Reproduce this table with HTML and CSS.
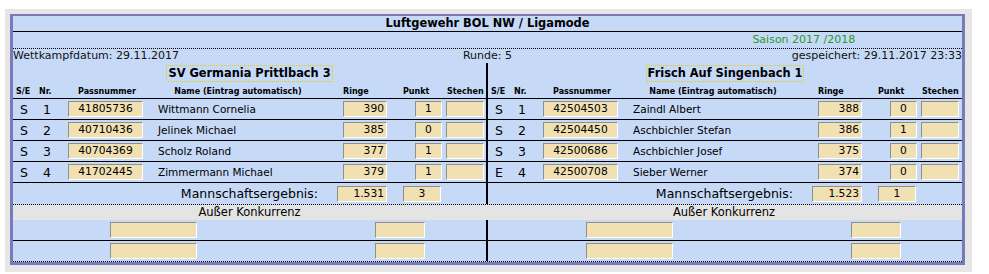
FILE: index.html
```html
<!DOCTYPE html>
<html lang="de">
<head>
<meta charset="utf-8">
<title>Luftgewehr BOL NW / Ligamode</title>
<link rel="stylesheet" href="styles.css">
</head>
<body>
<div class="page">
  <div class="board">
    <div class="title">Luftgewehr BOL NW / Ligamode</div>
    <div class="season"><span></span><span></span><span class="season-text">Saison 2017 /2018</span></div>
    <div class="info">
      <span>Wettkampfdatum: 29.11.2017</span>
      <span class="runde">Runde: 5</span>
      <span class="saved">gespeichert: 29.11.2017 23:33</span>
    </div>

    <div class="split teams">
      <div class="half"><span class="team">SV Germania Prittlbach 3</span></div>
      <div class="half r"><span class="team">Frisch Auf Singenbach 1</span></div>
    </div>

    <div class="split head">
      <div class="cols">
        <span class="h-se">S/E</span><span class="h-nr">Nr.</span><span class="h-pass">Passnummer</span><span class="h-name">Name (Eintrag automatisch)</span><span class="h-ringe">Ringe</span><span class="h-punkt">Punkt</span><span class="h-stechen">Stechen</span>
      </div>
      <div class="cols r">
        <span class="h-se">S/E</span><span class="h-nr">Nr.</span><span class="h-pass">Passnummer</span><span class="h-name">Name (Eintrag automatisch)</span><span class="h-ringe">Ringe</span><span class="h-punkt">Punkt</span><span class="h-stechen">Stechen</span>
      </div>
    </div>

    <div class="split row">
      <div class="cols"><span class="se">S</span><span class="nr">1</span><span class="fld pass">41805736</span><span class="name">Wittmann Cornelia</span><span class="fld ringe">390</span><span class="fld punkt">1</span><span class="fld stechen"></span></div>
      <div class="cols r"><span class="se">S</span><span class="nr">1</span><span class="fld pass">42504503</span><span class="name">Zaindl Albert</span><span class="fld ringe">388</span><span class="fld punkt">0</span><span class="fld stechen"></span></div>
    </div>
    <div class="split row">
      <div class="cols"><span class="se">S</span><span class="nr">2</span><span class="fld pass">40710436</span><span class="name">Jelinek Michael</span><span class="fld ringe">385</span><span class="fld punkt">0</span><span class="fld stechen"></span></div>
      <div class="cols r"><span class="se">S</span><span class="nr">2</span><span class="fld pass">42504450</span><span class="name">Aschbichler Stefan</span><span class="fld ringe">386</span><span class="fld punkt">1</span><span class="fld stechen"></span></div>
    </div>
    <div class="split row">
      <div class="cols"><span class="se">S</span><span class="nr">3</span><span class="fld pass">40704369</span><span class="name">Scholz Roland</span><span class="fld ringe">377</span><span class="fld punkt">1</span><span class="fld stechen"></span></div>
      <div class="cols r"><span class="se">S</span><span class="nr">3</span><span class="fld pass">42500686</span><span class="name">Aschbichler Josef</span><span class="fld ringe">375</span><span class="fld punkt">0</span><span class="fld stechen"></span></div>
    </div>
    <div class="split row">
      <div class="cols"><span class="se">S</span><span class="nr">4</span><span class="fld pass">41702445</span><span class="name">Zimmermann Michael</span><span class="fld ringe">379</span><span class="fld punkt">1</span><span class="fld stechen"></span></div>
      <div class="cols r"><span class="se">E</span><span class="nr">4</span><span class="fld pass">42500708</span><span class="name">Sieber Werner</span><span class="fld ringe">374</span><span class="fld punkt">0</span><span class="fld stechen"></span></div>
    </div>

    <div class="split total">
      <div class="sum"><span class="sum-label">Mannschaftsergebnis:</span><span class="fld sum-ringe">1.531</span><span class="fld sum-punkt">3</span></div>
      <div class="sum r"><span class="sum-label">Mannschaftsergebnis:</span><span class="fld sum-ringe">1.523</span><span class="fld sum-punkt">1</span></div>
    </div>

    <div class="split ak-head">
      <div class="ak-title">Außer Konkurrenz</div>
      <div class="ak-title">Außer Konkurrenz</div>
    </div>

    <div class="split ak-row">
      <div class="ak"><span class="fld ak-pass"></span><span class="fld ak-ringe"></span></div>
      <div class="ak r"><span class="fld ak-pass"></span><span class="fld ak-ringe"></span></div>
    </div>
    <div class="split ak-row last">
      <div class="ak"><span class="fld ak-pass"></span><span class="fld ak-ringe"></span></div>
      <div class="ak r"><span class="fld ak-pass"></span><span class="fld ak-ringe"></span></div>
    </div>
  </div>
</div>
</body>
</html>
```

FILE: styles.css
```css
* { box-sizing: border-box; }

body {
  margin: 0;
  background: #ffffff;
  font-family: "DejaVu Sans", Verdana, sans-serif;
  color: #000;
}

.page {
  margin: 9px 17px 0 5px;
  padding: 5px 7px 7px 5px;
  background: #e6e6e6;
}

.board {
  background: #c6d9f7;
  border: 3px solid #7a79b9;
  border-top-width: 2px;
}

.title {
  height: 16px;
  line-height: 15px;
  text-align: center;
  font-weight: bold;
  font-size: 11.4px;
  border-bottom: 1px solid #000;
}

.season {
  display: grid;
  grid-template-columns: 1fr 1fr 1fr;
  height: 17px;
  line-height: 16px;
  font-size: 11px;
  border-bottom: 1px dotted #000;
}

.season-text {
  text-align: center;
  color: #2a9a2a;
}

.info {
  display: grid;
  grid-template-columns: 1fr auto 1fr;
  height: 14px;
  line-height: 14px;
  font-size: 11px;
  color: #111;
}

.runde { text-align: center; }
.saved { text-align: right; }

.split {
  display: grid;
  grid-template-columns: 473px 1fr;
}

.split > .r {
  border-left: 2px solid #000;
}

.teams { height: 21px; }

.half {
  display: flex;
  justify-content: center;
  align-items: center;
}

.team {
  font-weight: bold;
  font-size: 11.4px;
  line-height: 15px;
  padding: 0 1px;
  border: 1px dotted #e2d000;
}

.cols {
  display: grid;
  grid-template-columns: 23px 28px 86px 188px 57px 49px 1fr;
  align-items: center;
}

.head {
  height: 15px;
  border-bottom: 1px solid #000;
  font-size: 8px;
  font-weight: bold;
}

.head .cols { height: 14px; }

.h-se { padding-left: 3px; }
.h-nr { padding-left: 3px; }
.h-pass { text-align: center; }
.h-name { text-align: center; padding-right: 12px; }
.h-ringe { padding-left: 5px; }
.h-punkt { padding-left: 8px; }
.h-stechen { padding-left: 3px; }

.row {
  height: 21px;
  border-bottom: 1px solid #000;
}

.se {
  padding-left: 7px;
  font-size: 12.5px;
}

.nr {
  padding-left: 7px;
  font-size: 12.5px;
}

.name {
  padding-left: 8px;
  font-size: 10.5px;
}

.fld {
  display: block;
  height: 16px;
  background: #f1e0b2;
  border: 1px solid;
  border-color: #8f8f8f #ffffff #ffffff #8f8f8f;
  font-size: 10.7px;
  line-height: 14px;
  text-align: center;
}

.pass { margin-left: 4px; width: 75px; }
.ringe { margin-left: 5px; width: 44px; text-align: right; padding-right: 2px; }
.punkt { margin-left: 20px; width: 27px; }
.stechen { margin-left: 2px; width: 38px; }

.total {
  height: 22px;
  border-bottom: 1px dotted #000;
}

.sum {
  display: flex;
  align-items: center;
}

.sum-label {
  width: 305px;
  text-align: right;
  font-size: 12.5px;
}

.sum-ringe { margin-left: 19px; width: 50px; text-align: right; padding-right: 2px; }
.sum-punkt { margin-left: 16px; width: 38px; }

.ak-head {
  height: 15px;
  background: #e4e4e4;
}

.ak-title {
  text-align: center;
  font-size: 11.5px;
  line-height: 15px;
}

.ak-row {
  height: 21px;
  border-bottom: 1px solid #000;
}

.ak-row.last {
  border-bottom-style: dotted;
}

.ak {
  display: flex;
  align-items: center;
}

.ak-pass { margin-left: 97px; width: 87px; }
.ak-ringe { margin-left: 178px; width: 50px; }
.r .ak-pass { margin-left: 98px; }
```
